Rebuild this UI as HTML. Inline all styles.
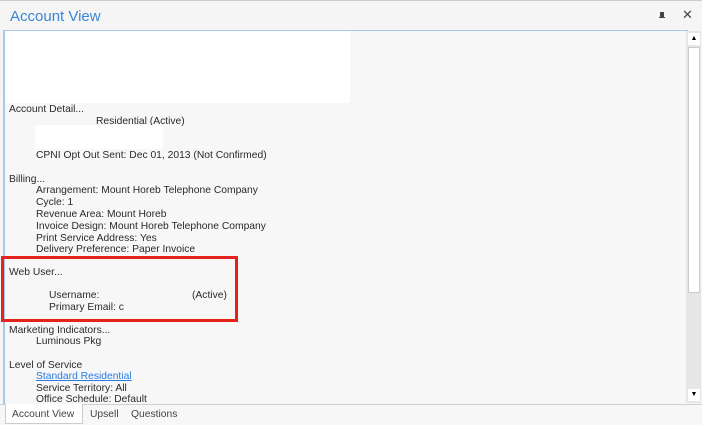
<!DOCTYPE html>
<html><head><style>
body{margin:0;width:702px;height:424px;overflow:hidden;background:#f5f5f5;font-family:"Liberation Sans",Arial,sans-serif;position:relative}
.t{position:absolute;font-size:10.3px;color:#2a2a2a;white-space:nowrap;line-height:12px}
</style></head><body>
<div style="position:absolute;left:0;top:0;width:702px;height:1px;background:#ccc"></div>
<div class="t" style="left:10px;top:8px;font-size:15px;line-height:18px;color:#3a84d6">Account View</div>
<div style="position:absolute;left:660px;top:12px;width:4px;height:6px;background:#444"></div>
<div style="position:absolute;left:659px;top:17px;width:6px;height:1px;background:#444"></div>
<div class="t" style="left:682px;top:9px;font-size:13px;color:#444">✕</div>
<div style="position:absolute;left:3px;top:30px;width:683px;height:373px;background:#f7f7f7;border-left:2px solid #a9c7e8;border-top:1px solid #a9c7e8"></div>
<div style="position:absolute;left:5px;top:31px;width:345px;height:72px;background:#fff"></div>
<div style="position:absolute;left:686px;top:31px;width:15px;height:372px;background:#e6e6e6"></div>
<div style="position:absolute;left:688px;top:33px;width:12px;height:12px;background:#fff;font-size:7px;text-align:center;line-height:12px">▲</div>
<div style="position:absolute;left:688px;top:389px;width:12px;height:12px;background:#fff;font-size:7px;text-align:center;line-height:12px">▼</div>
<div style="position:absolute;left:688px;top:47px;width:12px;height:246px;background:#fff;border:1px solid #ccc;box-sizing:border-box"></div>
<div class="t" style="left:9px;top:104px">Account Detail...</div>
<div class="t" style="left:96px;top:116px">Residential (Active)</div>
<div style="position:absolute;left:35px;top:125px;width:128px;height:24px;background:#fff"></div>
<div class="t" style="left:36px;top:150px">CPNI Opt Out Sent: Dec 01, 2013 (Not Confirmed)</div>
<div class="t" style="left:9px;top:174px">Billing...</div>
<div class="t" style="left:36px;top:185px">Arrangement: Mount Horeb Telephone Company</div>
<div class="t" style="left:36px;top:197px">Cycle: 1</div>
<div class="t" style="left:36px;top:209px">Revenue Area: Mount Horeb</div>
<div class="t" style="left:36px;top:221px">Invoice Design: Mount Horeb Telephone Company</div>
<div class="t" style="left:36px;top:233px">Print Service Address: Yes</div>
<div class="t" style="left:36px;top:244px">Delivery Preference: Paper Invoice</div>
<div style="position:absolute;left:1px;top:256px;width:231px;height:60px;border:3px solid #e5231d"></div>
<div class="t" style="left:9px;top:267px">Web User...</div>
<div class="t" style="left:49px;top:290px">Username:</div>
<div class="t" style="left:192px;top:290px">(Active)</div>
<div class="t" style="left:49px;top:302px">Primary Email: c</div>
<div class="t" style="left:9px;top:325px">Marketing Indicators...</div>
<div class="t" style="left:36px;top:336px">Luminous Pkg</div>
<div class="t" style="left:9px;top:360px">Level of Service</div>
<div class="t" style="left:36px;top:371px;color:#2a7ae2;text-decoration:underline">Standard Residential</div>
<div class="t" style="left:36px;top:383px">Service Territory: All</div>
<div class="t" style="left:36px;top:394px">Office Schedule: Default</div>
<div style="position:absolute;left:0;top:404px;width:702px;height:20px;background:#f7f7f7;border-top:1px solid #d0d0d0"></div>
<div style="position:absolute;left:5px;top:404px;width:78px;height:20px;background:#fff;border:1px solid #ccc;border-top:none;box-sizing:border-box"></div>
<div class="t" style="left:12px;top:409px;color:#444">Account View</div>
<div class="t" style="left:90px;top:409px;color:#444">Upsell</div>
<div class="t" style="left:131px;top:409px;color:#444">Questions</div>
</body></html>
